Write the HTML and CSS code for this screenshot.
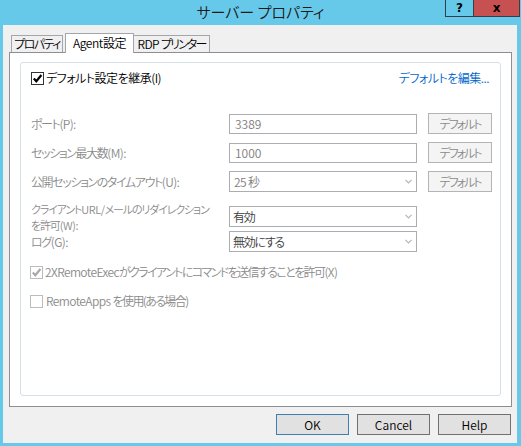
FILE: index.html
```html
<!DOCTYPE html>
<html lang="ja">
<head>
<meta charset="utf-8">
<title>サーバー プロパティ</title>
<link rel="stylesheet" href="styles.css">
</head>
<body>
<div class="window">
  <div class="titlebar">
    <div></div>
    <div class="title">サーバー プロパティ</div>
    <div class="caption-btns">
      <div class="cb cb-help">?</div>
      <div class="cb cb-close">x</div>
    </div>
  </div>
  <div class="client">
    <div class="tabs">
      <div class="tab tab-first">プロパティ</div>
      <div class="tab tab-sel">Agent設定</div>
      <div class="tab tab-last"><span class="l">RDP </span>プリンター</div>
    </div>
    <div class="panel">
      <div class="group">
        <div class="toprow">
          <div class="chk">
            <span class="box">
              <svg width="11" height="11" viewBox="0 0 11 11"><polyline points="1.8,5.6 4.3,8.3 9.4,2" fill="none" stroke="#000" stroke-width="2.2"/></svg>
            </span>
            <span class="chk-text">デフォルト設定を継承(I)</span>
          </div>
          <span class="link">デフォルトを編集...</span>
        </div>

        <div class="frow r1">
          <div class="lbl">ポート<span class="l">(P):</span></div>
          <div class="field input">3389</div>
          <div class="dbtn">デフォルト</div>
        </div>
        <div class="frow r2">
          <div class="lbl">セッション最大数<span class="l">(M):</span></div>
          <div class="field input">1000</div>
          <div class="dbtn">デフォルト</div>
        </div>
        <div class="frow r3">
          <div class="lbl">公開セッションのタイムアウト<span class="l">(U):</span></div>
          <div class="field combo"><span>25 秒</span><svg width="7" height="5" viewBox="0 0 7 5"><polyline points="0.5,0.8 3.5,3.8 6.5,0.8" fill="none" stroke="#b5b5b5" stroke-width="1.2"/></svg></div>
          <div class="dbtn">デフォルト</div>
        </div>
        <div class="frow r4">
          <div class="lbl lbl2">クライアント<span class="l">URL/</span>メールのリダイレクション<br>を許可<span class="l">(W):</span></div>
          <div class="field combo dark"><span>有効</span><svg width="7" height="5" viewBox="0 0 7 5"><polyline points="0.5,0.8 3.5,3.8 6.5,0.8" fill="none" stroke="#b5b5b5" stroke-width="1.2"/></svg></div>
        </div>
        <div class="frow r5">
          <div class="lbl">ログ<span class="l">(G):</span></div>
          <div class="field combo dark"><span>無効にする</span><svg width="7" height="5" viewBox="0 0 7 5"><polyline points="0.5,0.8 3.5,3.8 6.5,0.8" fill="none" stroke="#b5b5b5" stroke-width="1.2"/></svg></div>
        </div>

        <div class="chkrow c1">
          <span class="box dis">
            <svg width="11" height="11" viewBox="0 0 11 11"><polyline points="1.8,5.6 4.3,8.3 9.4,2" fill="none" stroke="#a9a9a9" stroke-width="2.2"/></svg>
          </span>
          <span class="chk-text gray"><span class="l">2XRemoteExec</span>がクライアントにコマンドを送信することを許可<span class="l">(X)</span></span>
        </div>
        <div class="chkrow c2">
          <span class="box dis"></span>
          <span class="chk-text gray"><span class="l">RemoteApps </span>を使用(ある場合)</span>
        </div>
      </div>
    </div>
    <div class="buttons">
      <div class="btn btn-default">OK</div>
      <div class="btn">Cancel</div>
      <div class="btn">Help</div>
    </div>
  </div>
</div>
</body>
</html>
```

FILE: styles.css
```css
* { box-sizing: border-box; }

html, body {
  margin: 0;
  padding: 0;
}

body {
  width: 521px;
  height: 446px;
  background: #67c9ea;
  font-family: "Noto Sans CJK JP", sans-serif;
  font-size: 12px;
  font-weight: 350;
  letter-spacing: -0.5px;
  font-feature-settings: "palt" 1;
  color: #000;
  overflow: hidden;
}

.window {
  width: 521px;
  height: 446px;
}

/* Latin runs inside condensed Japanese text */
.l {
  letter-spacing: -0.6px;
}

/* Title bar */
.titlebar {
  height: 25px;
  display: grid;
  grid-template-columns: 1fr auto 1fr;
  align-items: start;
}

.title {
  font-size: 15px;
  line-height: 22px;
  padding-top: 1px;
  letter-spacing: 0;
  color: #1a1a1a;
  white-space: nowrap;
}

.caption-btns {
  justify-self: end;
  margin-right: 1px;
  display: flex;
  height: 17px;
  border: 1px solid #31404a;
  border-top: none;
}

.cb {
  height: 16px;
  display: flex;
  align-items: center;
  justify-content: center;
  font-family: "DejaVu Sans", sans-serif;
  font-weight: bold;
  font-size: 12px;
  letter-spacing: 0;
  line-height: 16px;
  color: #000;
}

.cb-help {
  width: 28px;
  border-right: 1px solid #31404a;
}

.cb-close {
  width: 45px;
  background: #c75050;
}

/* Client */
.client {
  margin-left: 3px;
  width: 514px;
  height: 418px;
  background: #f0f0f0;
  padding-top: 8px;
}

.tabs {
  display: flex;
  align-items: flex-end;
  height: 19px;
  padding-left: 8px;
}

.tab {
  height: 17px;
  border: 1px solid #a3a6ab;
  border-bottom: none;
  background: #f0f0f0;
  display: flex;
  align-items: center;
  justify-content: center;
  line-height: 14px;
  white-space: pre;
  letter-spacing: -1.6px;
}

.tab-first { width: 52px; }

.tab-sel {
  width: 69px;
  height: 20px;
  margin-left: 2px;
  margin-bottom: -1px;
  background: #fff;
  position: relative;
  z-index: 2;
  padding-bottom: 2px;
  letter-spacing: -0.4px;
}

.tab-last {
  width: 77px;
  margin-left: -1px;
  letter-spacing: -1.9px;
}

.tab-last .l {
  letter-spacing: -0.6px;
}

.panel {
  margin: 0 5px 0 6px;
  height: 355px;
  border: 1px solid #8c8e94;
  background: #fff;
  padding: 9px 10px 10px 10px;
}

.group {
  height: 334px;
  border: 1px solid #d6e0e6;
  border-radius: 3px;
  background: #fff;
  padding-top: 7px;
}

.toprow {
  height: 16px;
  display: flex;
  align-items: center;
  justify-content: space-between;
  padding-left: 10px;
  padding-right: 11px;
}

.chk {
  display: flex;
  align-items: center;
}

.box {
  width: 13px;
  height: 13px;
  border: 1px solid #333;
  background: #fff;
  display: flex;
  align-items: center;
  justify-content: center;
  flex: none;
}

.box.dis {
  border-color: #bcbcbc;
}

.chk-text {
  margin-left: 2px;
  white-space: pre;
  line-height: 16px;
}

.gray {
  color: #8a8a8a;
  letter-spacing: -1.6px;
}

.link {
  color: #0066cc;
  white-space: nowrap;
  line-height: 16px;
}

/* form rows */
.frow {
  display: flex;
  height: 21px;
  padding-left: 10px;
  align-items: flex-start;
}

.r1 { margin-top: 27px; }
.r2 { margin-top: 8px; }
.r3 { margin-top: 8px; }
.r4 { margin-top: 14px; }
.r5 { margin-top: 4px; }

.lbl {
  width: 198px;
  flex: none;
  align-self: center;
  color: #8a8a8a;
  white-space: nowrap;
  line-height: 14px;
  letter-spacing: -1.4px;
}

.lbl2 {
  font-size: 11px;
  line-height: 16px;
  letter-spacing: -1.15px;
}

.lbl2 .l {
  letter-spacing: -0.4px;
}

.field {
  width: 188px;
  flex: none;
  border: 1px solid #abadb3;
  background: #fff;
  color: #7d7d7d;
  white-space: nowrap;
}

.input {
  height: 20px;
  margin-top: 1px;
  padding-left: 5px;
  line-height: 18px;
  letter-spacing: 0;
}

.combo {
  height: 21px;
  display: flex;
  align-items: center;
  justify-content: space-between;
  padding-left: 4px;
  padding-right: 4px;
  line-height: 19px;
  letter-spacing: -0.6px;
}

.combo.dark {
  color: #3c3c3c;
  padding-left: 3px;
  letter-spacing: -1.3px;
}

.dbtn {
  width: 64px;
  height: 21px;
  flex: none;
  margin-left: 11px;
  border: 1px solid #b2b4b8;
  background: #f4f4f4;
  color: #8a8a8a;
  display: flex;
  align-items: center;
  justify-content: center;
  line-height: 14px;
  white-space: nowrap;
  letter-spacing: -2px;
}

.chkrow {
  display: flex;
  align-items: center;
  height: 16px;
  padding-left: 9px;
}

.c1 { margin-top: 12px; }
.c2 { margin-top: 13px; }

.c1 .chk-text { margin-left: 2px; }
.c2 .chk-text { margin-left: 3px; }

/* bottom buttons */
.buttons {
  display: flex;
  justify-content: flex-end;
  gap: 8px;
  margin-top: 7px;
  padding-right: 6px;
}

.btn {
  width: 73px;
  height: 21px;
  border: 1px solid #707070;
  background: #e1e1e1;
  display: flex;
  align-items: center;
  justify-content: center;
  line-height: 14px;
  letter-spacing: 0;
  color: #000;
}

.btn-default {
  border-color: #3c7fb1;
}
```
